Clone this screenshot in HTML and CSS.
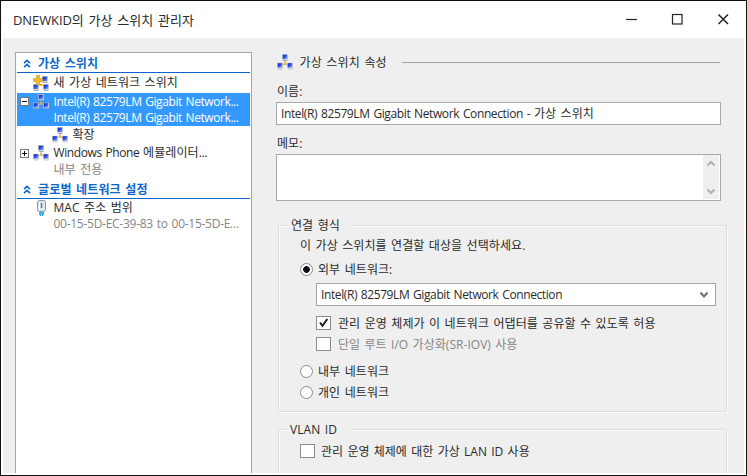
FILE: index.html
```html
<!DOCTYPE html>
<html lang="ko">
<head>
<meta charset="utf-8">
<title>가상 스위치 관리자</title>
<link rel="stylesheet" href="styles.css">
</head>
<body>
<svg class="defs" width="0" height="0" aria-hidden="true">
  <defs>
    <linearGradient id="screen" x1="0" y1="0" x2="1" y2="1">
      <stop offset="0" stop-color="#1428b4"/><stop offset=".45" stop-color="#2748e8"/><stop offset="1" stop-color="#8fb4ff"/>
    </linearGradient>
    <symbol id="pc" viewBox="0 0 6 7">
      <rect x="0" y="0" width="6" height="5.800" fill="#d3d0c4"/>
      <rect x=".7" y=".7" width="4.500" height="4.300" fill="url(#screen)"/>
      <path d="M1 6.200h4.500v.8H1z" fill="#8d95aa"/>
    </symbol>
    <symbol id="net" viewBox="0 0 16 16">
      <path d="M8 6v4M8 9.500l-3 2M8 9.500l3 2" stroke="#b2aea4" fill="none"/>
      <rect x="7" y="8.500" width="2.300" height="2" fill="#f0ad1c"/>
      <use href="#pc" x="5" y="0" width="6" height="7"/>
      <use href="#pc" x="0" y="8.500" width="6" height="7"/>
      <use href="#pc" x="10" y="8.500" width="6" height="7"/>
    </symbol>
    <symbol id="netnew" viewBox="0 0 16 16">
      <use href="#pc" x="9" y="1" width="6" height="7"/>
      <use href="#pc" x="0" y="9" width="6" height="7"/>
      <use href="#pc" x="10" y="9" width="6" height="7"/>
      <path d="M3.500 .5h3v3h3v3h-3v3.500h-3V6.500h-3v-3h3z" fill="#f3bd2a" stroke="#c48b17" stroke-width=".6"/>
      <rect x="7" y="9" width="2.500" height="2" fill="#f0ad1c"/>
    </symbol>
    <symbol id="chev2" viewBox="0 0 8 9">
      <path d="M1 4.200L4 1.300l3 2.900M1 8.200l3-2.900 3 2.900" fill="none" stroke="#0a66cc" stroke-width="1.600"/>
    </symbol>
  </defs>
</svg>
<div class="window">
  <header class="titlebar">
    <h1><span class="lat">DNEWKID</span>의 가상 스위치 관리자</h1>
    <svg class="controls" width="104" height="14" viewBox="0 0 104 14" fill="none" stroke="#222">
      <path d="M0 7.500h11" stroke-width="1.200"/>
      <rect x="46.500" y="2.500" width="9.500" height="9.500" stroke-width="1.200"/>
      <path d="M92.500 2.500l9.500 9.500M102 2.500l-9.500 9.500" stroke-width="1.500"/>
    </svg>
  </header>
  <div class="content">
    <nav class="tree">
      <h2 class="group"><svg width="8" height="9"><use href="#chev2"/></svg><span>가상 스위치</span></h2>
      <div class="node first"><svg class="icon" width="16" height="16"><use href="#netnew"/></svg><span>새 가상 네트워크 스위치</span></div>
      <div class="selected">
        <div class="node"><svg class="toggle" width="9" height="9"><rect x=".5" y=".5" width="8" height="8" fill="#fff" stroke="#777"/><path d="M2 4.500h5" stroke="#111"/></svg><svg class="icon" width="16" height="16"><use href="#net"/></svg><span class="lat">Intel(R) 82579LM Gigabit Network...</span></div>
        <div class="detail lat">Intel(R) 82579LM Gigabit Network...</div>
      </div>
      <div class="node child"><svg class="icon" width="16" height="16"><use href="#net"/></svg><span>확장</span></div>
      <div class="node phone"><svg class="toggle" width="9" height="9"><rect x=".5" y=".5" width="8" height="8" fill="#fff" stroke="#777"/><path d="M2 4.500h5M4.500 2v5" stroke="#111"/></svg><svg class="icon" width="16" height="16"><use href="#net"/></svg><span><span class="lat">Windows Phone </span>에뮬레이터<span class="lat">...</span></span></div>
      <div class="detail muted access">내부 전용</div>
      <h2 class="group second"><svg width="8" height="9"><use href="#chev2"/></svg><span>글로벌 네트워크 설정</span></h2>
      <div class="node mac"><svg class="icon" width="16" height="16" viewBox="0 0 16 16"><rect x="4.500" y=".5" width="8" height="11" rx="2" fill="#dfe8ee" stroke="#8296a4"/><path d="M8.500 3v5" stroke="#5f7d93" stroke-width="1.500"/><path d="M6.500 2v8" stroke="#fff"/><rect x="6" y="12" width="5" height="3" fill="#35b9e8"/><path d="M7.500 15v1M9.500 15v1" stroke="#2487b5"/></svg><span>MAC 주소 범위</span></div>
      <div class="detail muted lat addr">00-15-5D-EC-39-83 to 00-15-5D-E...</div>
    </nav>
    <main class="pane">
      <div class="heading"><svg width="16" height="16"><use href="#net"/></svg><span>가상 스위치 속성</span><i class="rule"></i></div>
      <div class="label name">이름:</div>
      <div class="field"><span><span class="lat">Intel(R) 82579LM Gigabit Network Connection - </span>가상 스위치</span></div>
      <div class="label memo">메모:</div>
      <div class="textarea">
        <div class="scroll">
          <svg width="10" height="7"><path d="M1.500 5.500L5 2l3.500 3.500" fill="none" stroke="#b0b0b0" stroke-width="2"/></svg>
          <svg width="10" height="7"><path d="M1.500 1.500L5 5l3.500-3.500" fill="none" stroke="#b0b0b0" stroke-width="2"/></svg>
        </div>
      </div>
      <fieldset class="box connection">
        <legend>연결 형식</legend>
        <p class="prompt">이 가상 스위치를 연결할 대상을 선택하세요.</p>
        <div class="option external"><i class="radio on"></i><span>외부 네트워크:</span></div>
        <div class="combo"><span class="lat">Intel(R) 82579LM Gigabit Network Connection</span><svg width="10" height="8"><path d="M1.500 1.500L5 5.500l3.500-4" fill="none" stroke="#707070" stroke-width="2"/></svg></div>
        <div class="option sub share"><i class="check"><svg width="13" height="12"><path d="M3 5.500l2.500 3.300L10.300 2" fill="none" stroke="#222" stroke-width="2"/></svg></i><span>관리 운영 체제가 이 네트워크 어댑터를 공유할 수 있도록 허용</span></div>
        <div class="option sub sriov"><i class="check"></i><span>단일 루트 I/O 가상화(SR-IOV) 사용</span></div>
        <div class="option internal"><i class="radio"></i><span>내부 네트워크</span></div>
        <div class="option private"><i class="radio"></i><span>개인 네트워크</span></div>
      </fieldset>
      <fieldset class="box vlan">
        <legend>VLAN ID</legend>
        <div class="option"><i class="check"></i><span>관리 운영 체제에 대한 가상 LAN ID 사용</span></div>
      </fieldset>
    </main>
  </div>
</div>
</body>
</html>
```
FILE: styles.css
```css
* { box-sizing: border-box; }
body {
  margin: 0;
  font: 12px/16px "Open Sans", "Noto Sans CJK KR", sans-serif;
  letter-spacing: .08px;
  word-spacing: 1.2px;
  color: #2a2a2a;
  white-space: nowrap;
}
h1, h2, p { margin: 0; font-weight: 400; }
svg { display: block; flex: none; }
.defs { position: absolute; }
.lat { letter-spacing: -.4px; word-spacing: 1px; white-space: pre; }

.window {
  width: 747px;
  height: 476px;
  border: 1px solid #111;
  padding: 0 2px 2px;
  background: #fff;
  display: flex;
  flex-direction: column;
  overflow: hidden;
}
.titlebar {
  height: 37px;
  flex: none;
  display: flex;
  align-items: center;
  justify-content: space-between;
  padding: 0 14px 2px 10px;
}
.titlebar h1 { font-size: 13px; line-height: 18px; padding-top: 2px; }
.titlebar .lat { letter-spacing: -.1px; }
.content {
  flex: 1;
  min-height: 0;
  display: flex;
  background: #efefef;
  overflow: hidden;
}

.tree {
  width: 237px;
  margin: 14px 0 0 12px;
  flex: none;
  border: 1px solid #a5a5a8;
  border-bottom: 0;
  padding: 0 1px;
  background: #fff;
}
.group {
  height: 20px;
  display: flex;
  align-items: center;
  gap: 7px;
  padding: 2px 0 0 6px;
  border-bottom: 1px solid #0a66cc;
  font-size: 12px;
  font-weight: 700;
  color: #0a66cc;
}
.group.second { margin-top: 2px; height: 20px; padding-top: 2px; letter-spacing: .15px; }
.node { height: 18px; display: flex; align-items: center; gap: 4px; padding-left: 16px; }
.node > span { margin-left: .5px; }
.first { height: 20px; }
.node:has(.toggle) { padding-left: 3px; }
.selected { height: 33px; background: #3399ff; color: #fff; }
.selected .node { height: 17px; }
.detail { height: 16px; padding-left: 36.500px; }
.selected .lat { letter-spacing: -.42px; }
.child { padding-left: 35px; height: 18px; }
.phone .lat { letter-spacing: -.4px; }
.access { height: 15px; line-height: 15px; }
.muted { color: #858585; }
.mac { height: 17px; }
.addr { letter-spacing: -.27px; }

.pane { margin-left: 24px; width: 451px; flex: none; }
.heading { display: flex; align-items: center; height: 16px; margin-top: 16px; padding-left: 1px; }
.heading span { margin: 2px 0 0 6.500px; letter-spacing: .15px; }
.rule { flex: 1; height: 1px; margin: 1px 7px 0 15px; background: #a0a0a0; }
.label { padding-left: 1px; height: 16px; line-height: 18px; }
.name { margin-top: 13px; }
.field {
  width: 445px;
  height: 23px;
  margin-top: 3px;
  border: 1px solid #a8a8b0;
  background: #fff;
  padding: 3px 4px;
}
.field .lat { letter-spacing: -.38px; }
.memo { margin-top: 10px; }
.textarea {
  width: 445px;
  height: 47px;
  margin-top: 3px;
  border: 1px solid #a8a8b0;
  padding: 0 1px 1px 0;
  background: #fff;
  display: flex;
  justify-content: flex-end;
}
.scroll {
  width: 16px;
  background: #efefef;
  display: flex;
  flex-direction: column;
  justify-content: space-between;
  align-items: center;
  padding: 5px 0 4px;
}
.box {
  position: relative;
  width: 449px;
  margin: 0 0 0 2px;
  padding: 0 0 0 21px;
  min-width: 0;
  border: 1px solid #d3dee7;
  border-radius: 2px;
  box-shadow: 1px 1px 0 #fafafa, inset 1px 1px 0 #fafafa;
}
legend { margin-left: -14px; padding: 0 13px 0 5px; height: 16px; line-height: 18px; background: #efefef; }
.vlan legend { padding-left: 4px; }
.connection { height: 195px; margin-top: 16px; }
.vlan { height: 60px; margin-top: 9px; }
.prompt { margin-top: 4px; line-height: 17px; height: 16px; }
.option { display: flex; align-items: center; height: 16px; gap: 5px; }
.option > span { padding-top: 2px; }
.radio {
  width: 13px;
  height: 13px;
  flex: none;
  border: 1px solid #8a8a8a;
  border-radius: 50%;
  background: #fff;
}
.radio.on { background: radial-gradient(circle, #111 0 3px, #fff 3.700px); }
.check {
  width: 15px;
  height: 14px;
  flex: none;
  border: 1px solid #8a8a8a;
  background: #fff;
}
.external { margin-top: 8px; }
.combo {
  width: 400px;
  height: 23px;
  margin: 6px 0 0 16px;
  padding: 0 6px 0 4px;
  border: 1px solid #a5a5a5;
  background: #fff;
  display: flex;
  align-items: center;
  justify-content: space-between;
}
.sub { margin-left: 16px; gap: 7px; }
.share { margin-top: 9px; }
.sriov { margin-top: 5px; color: #858585; }
.sriov span { letter-spacing: .04px; }
.internal { margin-top: 11px; }
.private { margin-top: 5px; }
.vlan .option { margin-top: 6px; gap: 6px; }
.vlan .option span { letter-spacing: 0; }
```
